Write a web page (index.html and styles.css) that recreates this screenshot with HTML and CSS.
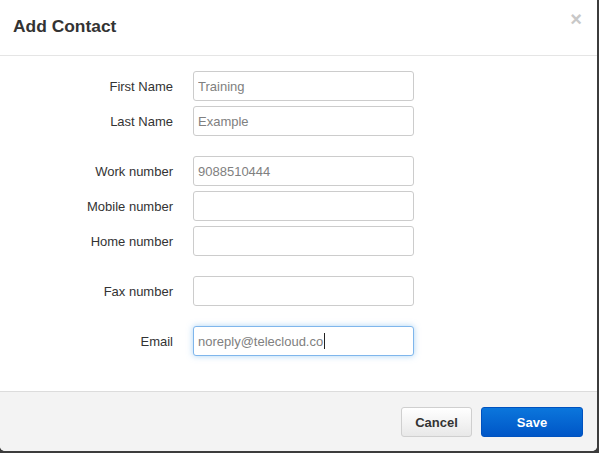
FILE: index.html
```html
<!DOCTYPE html>
<html lang="en">
  <head>
    <meta charset="UTF-8" />
    <meta name="viewport" content="width=device-width, initial-scale=1.0" />
    <title>Add Contact</title>
    <link rel="stylesheet" href="styles.css">
  </head>
  <body>
    <div class="modal">
      <div class="modal-header">
        <h1>Add Contact</h1>
        <button class="close" type="button">&times;</button>
      </div>

      <form class="modal-body" id="contactForm">
        <div class="group">
          <div class="row">
            <label for="firstName">First Name</label>
            <input type="text" id="firstName" value="Training" />
          </div>
          <div class="row">
            <label for="lastName">Last Name</label>
            <input type="text" id="lastName" value="Example" />
          </div>
        </div>

        <div class="group">
          <div class="row">
            <label for="workNumber">Work number</label>
            <input type="text" id="workNumber" value="9088510444" />
          </div>
          <div class="row">
            <label for="mobileNumber">Mobile number</label>
            <input type="text" id="mobileNumber" />
          </div>
          <div class="row">
            <label for="homeNumber">Home number</label>
            <input type="text" id="homeNumber" />
          </div>
        </div>

        <div class="group">
          <div class="row">
            <label for="faxNumber">Fax number</label>
            <input type="text" id="faxNumber" />
          </div>
        </div>

        <div class="group">
          <div class="row">
            <label for="email">Email</label>
            <span class="field">
              <input type="text" id="email" class="is-focused" value="noreply@telecloud.co" />
              <span class="caret"></span>
            </span>
          </div>
        </div>
      </form>

      <div class="modal-footer">
        <button class="btn btn-default" type="button">Cancel</button>
        <button class="btn btn-primary" type="submit" form="contactForm">Save</button>
      </div>
    </div>
  </body>
</html>
```

FILE: styles.css
```css
body {
  font-family: "Liberation Sans", Arial, sans-serif;
  margin: 0;
  padding: 0;
  background-color: #3c3c3c;
  height: 100vh;
}

.modal {
  width: 597px;
  height: 451px;
  background: white;
  border-radius: 0 0 5px 5px;
  display: flex;
  flex-direction: column;
  overflow: hidden;
}

.modal-header {
  display: flex;
  justify-content: space-between;
  align-items: flex-start;
  padding: 13px 15px 16px 13px;
  border-bottom: 1px solid #e5e5e5;
}

h1 {
  margin: 0;
  font-size: 17.4px;
  line-height: 26px;
  font-weight: bold;
  color: #333;
}

.close {
  margin: 0;
  padding: 0;
  border: none;
  background: none;
  font-family: "Liberation Sans", Arial, sans-serif;
  font-size: 20px;
  font-weight: bold;
  line-height: 12px;
  color: #c8c8c8;
  cursor: pointer;
}

.modal-body {
  flex: 1;
  display: flex;
  flex-direction: column;
  gap: 20px;
  padding: 15px 0 0;
  margin: 0;
}

.group {
  display: flex;
  flex-direction: column;
  gap: 5px;
}

.row {
  display: grid;
  grid-template-columns: 173px 221px;
  column-gap: 20px;
  align-items: center;
}

label {
  text-align: right;
  font-size: 13px;
  color: #333;
}

input {
  box-sizing: border-box;
  width: 100%;
  height: 30px;
  padding: 0 4px;
  border: 1px solid #ccc;
  border-radius: 3px;
  font-family: "Liberation Sans", Arial, sans-serif;
  font-size: 13px;
  color: #808080;
  background: white;
  outline: none;
}

input.is-focused,
input:focus {
  border-color: #7fb6ec;
  box-shadow: 0 0 6px rgba(102, 175, 233, 0.55);
}

.field {
  position: relative;
  display: block;
}

.caret {
  position: absolute;
  left: 131px;
  top: 7px;
  width: 1px;
  height: 16px;
  background: #222;
}

.modal-footer {
  display: flex;
  justify-content: flex-end;
  align-items: flex-start;
  gap: 9px;
  height: 60px;
  box-sizing: border-box;
  padding: 15px 14px 0;
  background-color: #f3f3f3;
  border-top: 1px solid #dcdcdc;
}

.btn {
  height: 30px;
  padding: 0;
  border-radius: 3px;
  font-family: "Liberation Sans", Arial, sans-serif;
  font-size: 13px;
  font-weight: bold;
  cursor: pointer;
}

.btn-default {
  width: 71px;
  color: #333;
  border: 1px solid #cfcfcf;
  background: linear-gradient(#ffffff, #e8e8e8);
}

.btn-primary {
  width: 102px;
  color: white;
  border: 1px solid #0052bf;
  background: linear-gradient(#0b76dc, #0056c7);
}
```
